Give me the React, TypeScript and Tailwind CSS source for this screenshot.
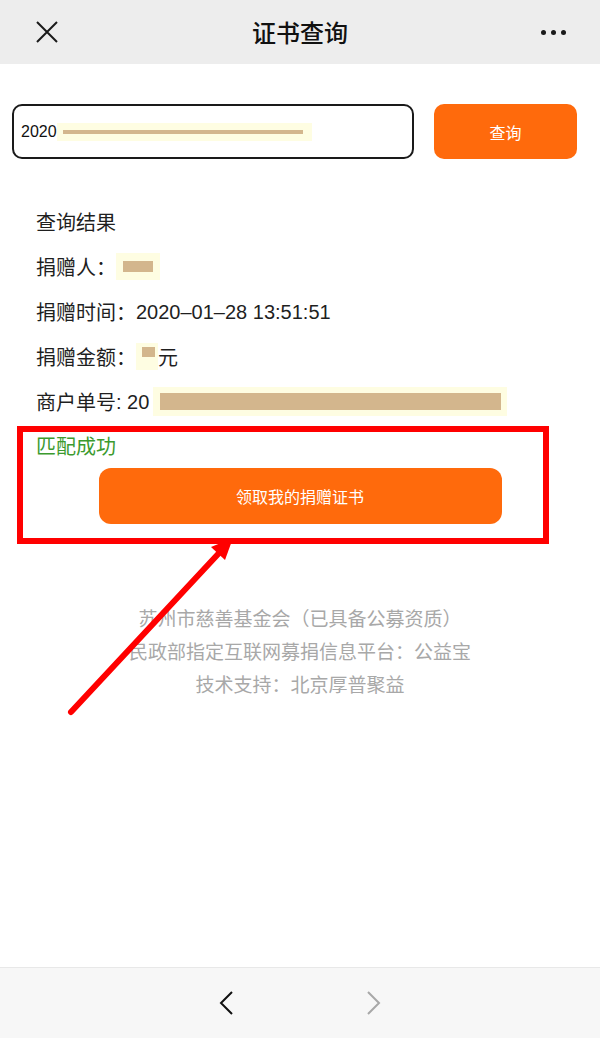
import React from "react"

const FONT = { fontFamily: '"Noto Sans CJK SC", "Liberation Sans", sans-serif' }

const Masked = ({ box, bar }: { box: string; bar: string }) => (
  <span className={`inline-flex bg-[#fefde2] ${box}`}>
    <span className={`bg-[#d3b68d] ${bar}`} />
  </span>
)

export default function App() {
  return (
    <div className="relative w-full h-[1038px] flex flex-col bg-white overflow-hidden text-[#1f1f1f]" style={FONT}>
      {/* ── HEADER ── */}
      <div className="h-16 shrink-0 bg-[#ededed] grid grid-cols-[1fr_auto_1fr] items-center">
        <div className="pl-[36px] flex items-center">
          <svg width="22" height="22" viewBox="0 0 22 22" fill="none" stroke="#1a1a1a" strokeWidth="2">
            <path d="M1 1 L21 21 M21 1 L1 21" />
          </svg>
        </div>
        <div className="text-[24px] font-medium text-[#111] leading-none">证书查询</div>
        <div className="pr-[34px] flex justify-end items-center gap-[5px]">
          <span className="w-[5px] h-[5px] rounded-full bg-[#1a1a1a]" />
          <span className="w-[5px] h-[5px] rounded-full bg-[#1a1a1a]" />
          <span className="w-[5px] h-[5px] rounded-full bg-[#1a1a1a]" />
        </div>
      </div>

      {/* ── SEARCH ── */}
      <div className="mt-10 px-3 flex items-center">
        <div className="w-[402px] h-[55px] border-2 border-[#1a1a1a] rounded-[10px] flex items-center pl-[7px] text-[16px] text-[#111]" style={{ fontFamily: '"Liberation Sans", sans-serif' }}>
          <span>2020</span>
          <span className="w-[255px] h-[18px] bg-[#fefde2] flex items-center pl-[6px]">
            <span className="w-[240px] h-[4px] bg-[#d3b68d]" />
          </span>
        </div>
        <button className="ml-5 w-[143px] h-[55px] bg-[#ff6a0c] rounded-[10px] text-white text-[16px]">查询</button>
      </div>

      {/* ── RESULT ── */}
      <div className="mt-10 text-[20px]">
        <div className="pl-9 h-[45px] flex items-center">查询结果</div>
        <div className="pl-9 h-[45px] flex items-center">
          捐赠人：
          <Masked box="w-[44px] h-[27px] items-center pl-[7px]" bar="w-[30px] h-[11px]" />
        </div>
        <div className="pl-9 h-[45px] flex items-center">
          捐赠时间：<span style={{ fontFamily: '"Liberation Sans", sans-serif' }}>2020–01–28 13:51:51</span>
        </div>
        <div className="pl-9 h-[45px] flex items-center">
          捐赠金额：
          <Masked box="w-[22px] h-[27px] items-start pt-[4px] pl-[6px]" bar="w-[13px] h-[10px]" />
          元
        </div>
        <div className="pl-9 h-[45px] flex items-center">
          商户单号<span style={{ fontFamily: '"Liberation Sans", sans-serif' }}>:&nbsp;20</span>
          <span className="ml-[4px] inline-flex">
            <Masked box="w-[354px] h-[29px] items-center pl-[7px]" bar="w-[341px] h-[17px]" />
          </span>
        </div>
        <div className="pl-9 h-[44px] flex items-center text-[#3c9a2e]">匹配成功</div>
        <div className="flex justify-center">
          <button className="w-[403px] h-[56px] bg-[#ff6a0c] rounded-[12px] text-white text-[16px]">领取我的捐赠证书</button>
        </div>
      </div>

      {/* ── FOOTER INFO ── */}
      <div className="mt-[77px] text-center text-[19px] leading-[33px] text-[#a8a8a8]">
        <p>苏州市慈善基金会（已具备公募资质）</p>
        <p>民政部指定互联网募捐信息平台：公益宝</p>
        <p>技术支持：北京厚普聚益</p>
      </div>

      {/* ── BOTTOM BAR ── */}
      <div className="mt-auto h-[71px] shrink-0 bg-[#f7f7f7] border-t border-[#e8e8e8] flex items-center justify-center gap-[122px]">
        <svg width="24" height="24" viewBox="0 0 24 24" fill="none" stroke="#111" strokeWidth="2">
          <polyline points="17,1 6,12 17,23" />
        </svg>
        <svg width="24" height="24" viewBox="0 0 24 24" fill="none" stroke="#a8a8a8" strokeWidth="2">
          <polyline points="7,1 18,12 7,23" />
        </svg>
      </div>

      {/* ── ANNOTATION: red box + arrow ── */}
      <div className="absolute left-[17px] top-[426px] w-[532px] h-[118px] border-[6px] border-[#ff0000] pointer-events-none" />
      <svg className="absolute left-0 top-0 pointer-events-none" width="600" height="1038" viewBox="0 0 600 1038">
        <line x1="71" y1="712" x2="220" y2="552" stroke="#ff0000" strokeWidth="6" strokeLinecap="round" />
        <polygon points="233,538 211,547 225,560" fill="#ff0000" />
      </svg>
    </div>
  )
}
